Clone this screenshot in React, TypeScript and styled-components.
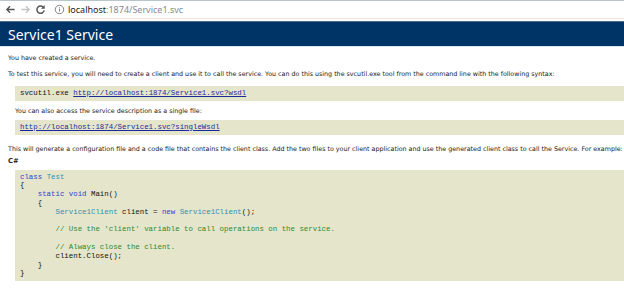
import React from "react";
import styled, { createGlobalStyle } from "styled-components";

const Global = createGlobalStyle`
  html, body { margin: 0; padding: 0; background: #ffffff; overflow: hidden; }
  body { width: 624px; height: 289px; }
`;

const Page = styled.div`
  display: flex;
  flex-direction: column;
  width: 624px;
  height: 289px;
  overflow: hidden;
`;

const Chrome = styled.div`
  display: flex;
  align-items: center;
  height: 17px;
  border-top: 1px solid #b8c6cc;
  border-bottom: 1px solid #f2e4dc;
  background: #ffffff;
  padding-left: 5px;
  gap: 4px;
`;

const NavIcon = styled.svg`
  width: 11px;
  height: 11px;
  flex: none;
`;

const Address = styled.div`
  display: flex;
  align-items: center;
  gap: 3px;
  margin-left: 4px;
  font-family: "Noto Sans", sans-serif;
  font-size: 9px;
  color: #8a8a8a;
`;

const Host = styled.span`
  color: #222222;
`;

const Spacer = styled.div`
  height: 2px;
`;

const Banner = styled.div`
  height: 24px;
  background: #003366;
  border-top: 1px solid #4d6d8f;
  border-bottom: 1px solid #dfe7ef;
  display: flex;
  align-items: center;
  padding-left: 8px;
  font-family: "Noto Sans", sans-serif;
  font-size: 14px;
  color: #ffffff;
`;

const Content = styled.div`
  display: flex;
  flex-direction: column;
  padding-left: 8px;
  font-family: "DejaVu Sans", Verdana, sans-serif;
  font-size: 6.35px;
  color: #1a1a1a;
`;

const Para = styled.p<{ $indent?: boolean; $top: number }>`
  margin: ${(p) => p.$top}px 0 0 ${(p) => (p.$indent ? 7 : 0)}px;
  line-height: 7px;
  white-space: nowrap;
`;

const Label = styled.p<{ $top: number }>`
  margin: ${(p) => p.$top}px 0 0 0;
  line-height: 7px;
  font-weight: bold;
  font-size: 6.8px;
`;

const Code = styled.pre<{ $top: number }>`
  margin: ${(p) => p.$top}px 0 0 7px;
  padding: 3px 5px;
  background: #e5e5cc;
  font-family: "Liberation Mono", "Courier New", monospace;
  font-size: 7.4px;
  line-height: 8.8px;
  color: #111111;
  white-space: pre;
  width: 700px;
`;

const Link = styled.span`
  color: #1a2a9a;
  text-decoration: underline;
`;

const Kw = styled.span`
  color: #2f3fcf;
`;

const Ty = styled.span`
  color: #2b91af;
`;

const Cm = styled.span`
  color: #2c8a2c;
`;

export default function App() {
  return (
    <>
      <Global />
      <Page>
        <Chrome>
          <NavIcon viewBox="0 0 12 12">
            <path d="M10.5 6H2.2M5.5 2.5 2 6l3.5 3.5" fill="none" stroke="#555" strokeWidth="1.5" />
          </NavIcon>
          <NavIcon viewBox="0 0 12 12">
            <path d="M1.5 6h8.3M6.5 2.5 10 6l-3.5 3.5" fill="none" stroke="#c4c4c4" strokeWidth="1.5" />
          </NavIcon>
          <NavIcon viewBox="0 0 12 12">
            <path d="M9.6 4.2A4 4 0 1 0 10 7" fill="none" stroke="#555" strokeWidth="1.6" />
            <path d="M10.6 1.2v4H6.6z" fill="#555" />
          </NavIcon>
          <Address>
            <NavIcon viewBox="0 0 12 12">
              <circle cx="6" cy="6" r="4.6" fill="none" stroke="#777" strokeWidth="1" />
              <path d="M6 5v3.3M6 3.4v.8" stroke="#777" strokeWidth="1" />
            </NavIcon>
            <span>
              <Host>localhost</Host>:1874/Service1.svc
            </span>
          </Address>
        </Chrome>
        <Spacer />
        <Banner>Service1 Service</Banner>
        <Content>
          <Para $top={6.5}>You have created a service.</Para>
          <Para $top={9}>
            To test this service, you will need to create a client and use it to call the service. You can do this
            using the svcutil.exe tool from the command line with the following syntax:
          </Para>
          <Code $top={9.5}>
            svcutil.exe <Link>http://localhost:1874/Service1.svc?wsdl</Link>
          </Code>
          <Para $indent $top={6.5}>You can also access the service description as a single file:</Para>
          <Code $top={5.5}>
            <Link>http://localhost:1874/Service1.svc?singleWsdl</Link>
          </Code>
          <Para $top={10.5}>
            This will generate a configuration file and a code file that contains the client class. Add the two files
            to your client application and use the generated client class to call the Service. For example:
          </Para>
          <Label $top={6}>C#</Label>
          <Code $top={4.5}>
            <Kw>class</Kw> <Ty>Test</Ty>
            {"\n{\n    "}
            <Kw>static</Kw> <Kw>void</Kw> Main()
            {"\n    {\n        "}
            <Ty>Service1Client</Ty> client = <Kw>new</Kw> <Ty>Service1Client</Ty>();
            {"\n\n        "}
            <Cm>// Use the 'client' variable to call operations on the service.</Cm>
            {"\n\n        "}
            <Cm>// Always close the client.</Cm>
            {"\n        client.Close();\n    }\n}"}
          </Code>
        </Content>
      </Page>
    </>
  );
}
